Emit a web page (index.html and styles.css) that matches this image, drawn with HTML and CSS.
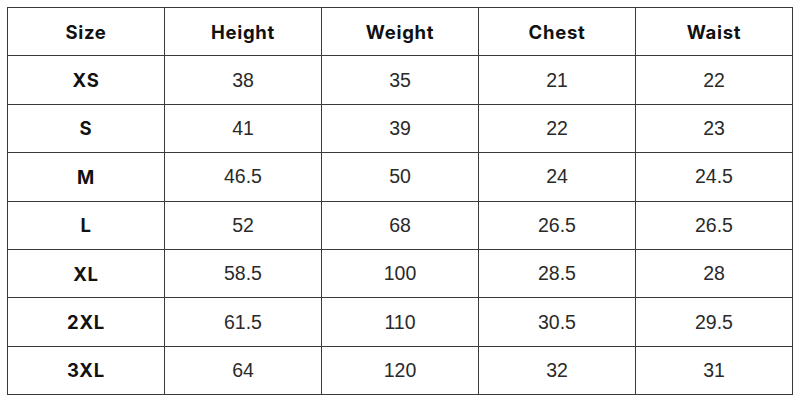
FILE: index.html
```html
<!DOCTYPE html>
<html>
<head>
<meta charset="utf-8">
<link rel="stylesheet" href="styles.css">
</head>
<body>
<table class="size-table">
  <thead>
    <tr><th>Size</th><th>Height</th><th>Weight</th><th>Chest</th><th>Waist</th></tr>
  </thead>
  <tbody>
    <tr><th>XS</th><td>38</td><td>35</td><td>21</td><td>22</td></tr>
    <tr><th>S</th><td>41</td><td>39</td><td>22</td><td>23</td></tr>
    <tr><th>M</th><td>46.5</td><td>50</td><td>24</td><td>24.5</td></tr>
    <tr><th>L</th><td>52</td><td>68</td><td>26.5</td><td>26.5</td></tr>
    <tr><th>XL</th><td>58.5</td><td>100</td><td>28.5</td><td>28</td></tr>
    <tr><th>2XL</th><td>61.5</td><td>110</td><td>30.5</td><td>29.5</td></tr>
    <tr><th>3XL</th><td>64</td><td>120</td><td>32</td><td>31</td></tr>
  </tbody>
</table>
</body>
</html>
```
FILE: styles.css
```css
html, body {
  margin: 0;
  padding: 0;
  background: #ffffff;
}
body {
  padding: 7px 7px 0 7px;
}
.size-table {
  border-collapse: collapse;
  width: 786px;
  table-layout: fixed;
  color: #111;
}
.size-table th,
.size-table td {
  border: 1px solid #3a3a3a;
  height: 47.4px;
  padding: 0;
  text-align: center;
  vertical-align: middle;
}
.size-table th {
  font-family: "Inter", "Lato", sans-serif;
  font-weight: 700;
  font-size: 18.5px;
  letter-spacing: 0.7px;
  color: #111;
}
.size-table td {
  font-family: "Liberation Sans", Arial, sans-serif;
  font-weight: 400;
  font-size: 19.5px;
  color: #2a2a2a;
}
```
